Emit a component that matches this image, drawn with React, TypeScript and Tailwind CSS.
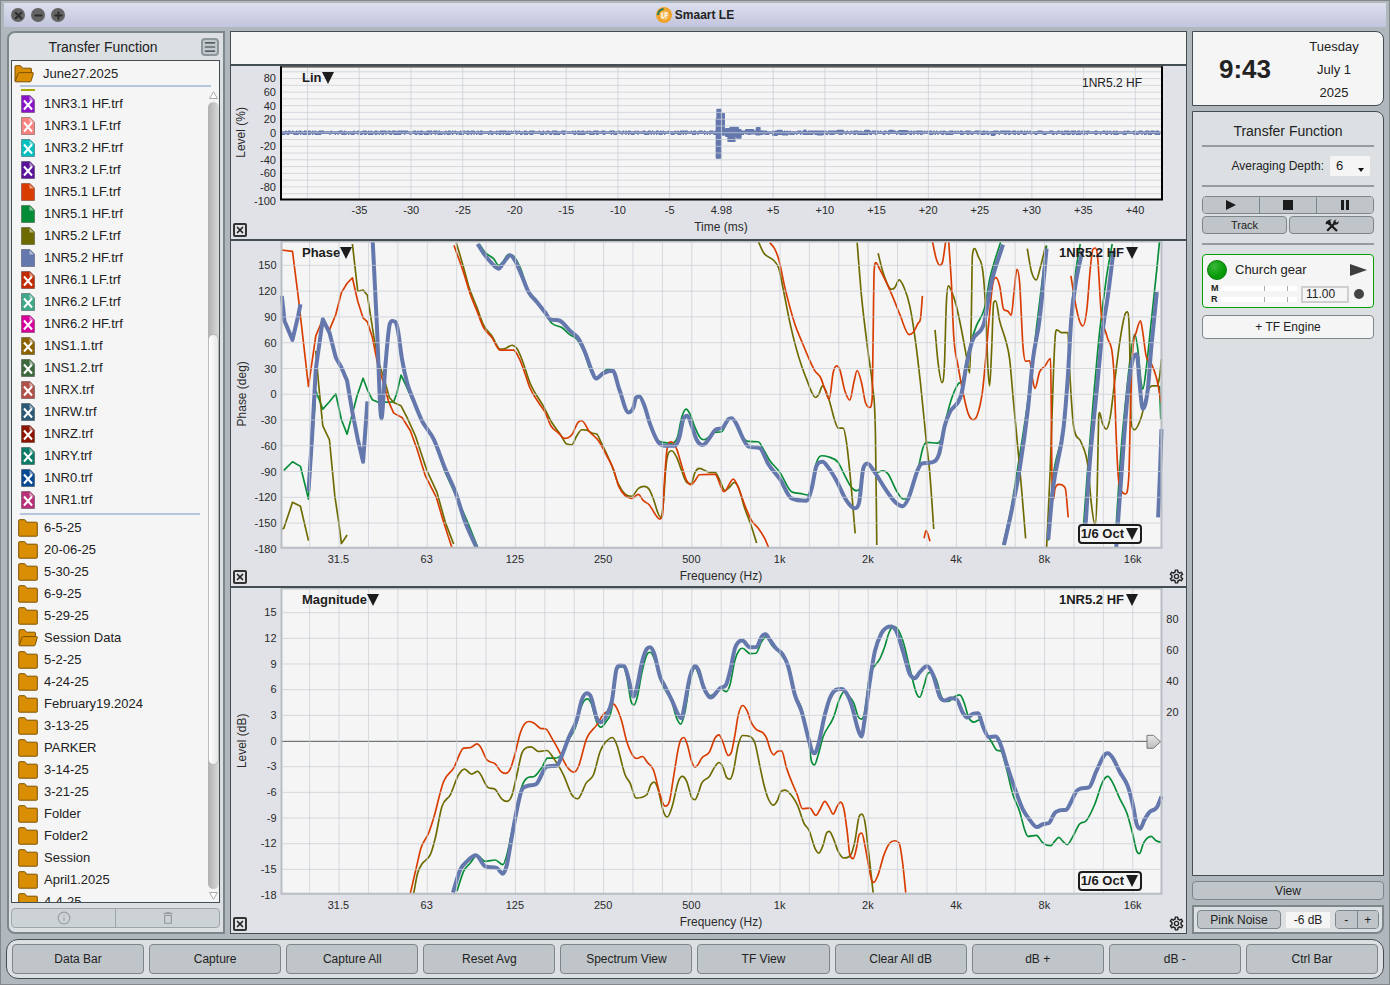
import { useState } from "react";
import type { ReactNode } from "react";
import { Info, Menu, Minus, Plus, X } from "lucide-react";
import { MdDeleteOutline, MdOutlineSettings } from "react-icons/md";

type Point = [number, number];
type Line = { pts: Point[]; straight?: boolean };
type Trace = { color: string; width: number; lines: Line[] };

const RED = "#d83c00";
const OLIVE = "#6d6b00";
const GREEN = "#068c37";
const BLUE = "#6478ad";

const files = [
    { name: "1NR3.1 HF.trf", color: "#8b14c8", hidden: true },
    { name: "1NR3.1 LF.trf", color: "#f8827d", hidden: true },
    { name: "1NR3.2 HF.trf", color: "#06c0c0", hidden: true },
    { name: "1NR3.2 LF.trf", color: "#5b1499", hidden: true },
    { name: "1NR5.1 LF.trf", color: RED },
    { name: "1NR5.1 HF.trf", color: GREEN },
    { name: "1NR5.2 LF.trf", color: OLIVE },
    { name: "1NR5.2 HF.trf", color: BLUE },
    { name: "1NR6.1 LF.trf", color: "#c22a00", hidden: true },
    { name: "1NR6.2 LF.trf", color: "#3fa888", hidden: true },
    { name: "1NR6.2 HF.trf", color: "#d8009c", hidden: true },
    { name: "1NS1.1.trf", color: "#8c6200", hidden: true },
    { name: "1NS1.2.trf", color: "#3d6a3d", hidden: true },
    { name: "1NRX.trf", color: "#b05049", hidden: true },
    { name: "1NRW.trf", color: "#2c5878", hidden: true },
    { name: "1NRZ.trf", color: "#8c1400", hidden: true },
    { name: "1NRY.trf", color: "#0b7a66", hidden: true },
    { name: "1NR0.trf", color: "#074a92", hidden: true },
    { name: "1NR1.trf", color: "#b83078", hidden: true },
];

const folders = [
    "6-5-25", "20-06-25", "5-30-25", "6-9-25", "5-29-25", "Session Data", "5-2-25", "4-24-25",
    "February19.2024", "3-13-25", "PARKER", "3-14-25", "3-21-25", "Folder", "Folder2", "Session",
    "April1.2025", "4-4-25",
];

const commands = [
    "Data Bar", "Capture", "Capture All", "Reset Avg", "Spectrum View",
    "TF View", "Clear All dB", "dB +", "dB -", "Ctrl Bar",
];

// "x,y x,y ..." -> points
const parse = (s: string, dx = 0): Point[] =>
    s.trim().split(/\s+/).map((p) => {
        const [x, y] = p.split(",").map(Number);
        return [x + dx, y];
    });

// traces are stored in two bands, the high band starts at 500 Hz
const low = (s: string): Line => ({ pts: parse(s) });
const high = (s: string): Line => ({ pts: parse(s, 1410) });
const full = (a: string, b: string): Line => ({ pts: [...parse(a), ...parse(b, 1410)] });
const straight = (s: string): Line => ({ pts: parse(s), straight: true });

// monotone cubic, so peaks do not overshoot
const toPath = ({ pts, straight: isStraight }: Line) => {
    if (isStraight) return "M" + pts.map((p) => p.join(" ")).join("L");
    const n = pts.length;
    const slope = (i: number) => (pts[i + 1][1] - pts[i][1]) / (pts[i + 1][0] - pts[i][0] || 1);
    const tan = pts.map((_, i) => {
        if (i === 0) return slope(0);
        if (i === n - 1) return slope(n - 2);
        const a = slope(i - 1);
        const b = slope(i);
        if (a * b <= 0) return 0;
        return Math.sign(a) * Math.min(Math.abs(a + b) / 2, 3 * Math.abs(a), 3 * Math.abs(b));
    });
    let d = `M${pts[0][0]} ${pts[0][1]}`;
    for (let i = 0; i < n - 1; i++) {
        const [x0, y0] = pts[i];
        const [x1, y1] = pts[i + 1];
        const h = (x1 - x0) / 3;
        d += `C${(x0 + h).toFixed(1)} ${(y0 + tan[i] * h).toFixed(1)} ${(x1 - h).toFixed(1)} ${(y1 - tan[i + 1] * h).toFixed(1)} ${x1} ${y1}`;
    }
    return d;
};

const phaseTraces: Trace[] = [
    {
        color: GREEN,
        width: 5,
        lines: [
            straight("160,704 186,678 210,692 234,790 256,465 277,520 297,498 316,474 333,552 350,595 380,480 398,427 411,462 426,492 445,500 490,498 500,470 512,418 525,445 545,490 575,555 610,610 645,710 675,775 710,855 742,934"),
            full(
                "747,24 765,50 790,68 805,88 818,78 835,55 850,60 870,95 895,165 920,195 945,232 965,262 995,275 1020,297 1040,310 1060,345 1080,400 1097,428 1120,408 1135,400 1150,405 1165,455 1180,500 1195,528 1210,515 1220,485 1228,480 1240,500 1255,545 1280,610 1300,620 1325,622 1342,605 1355,545 1368,520 1380,535 1395,575",
                "0,605 12,612 25,605 40,590 65,588 80,562 93,548 105,560 125,600 145,617 175,618 190,640 210,675 240,710 275,768 300,773 325,778 337,745 350,680 365,660 385,663 415,680 435,720 455,755 470,765 480,758 490,700 500,685 515,695 530,710 550,705 565,715 590,765 610,790 625,790 640,750 655,700 670,635 682,620 712,622 725,608 740,545 755,490 775,445 790,430 800,375 815,315 830,270 855,215 870,130 903,18"
            ),
            high("910,928 935,815 960,660 980,530 998,390 1010,280 1041,28"),
            high("1046,915 1060,730 1090,580 1105,420 1115,240 1128,110 1142,24"),
            high("1152,870 1165,690 1180,510 1200,290 1220,130 1238,24"),
            high("1250,870 1265,640 1283,450 1297,330 1306,295 1315,340 1325,440 1330,460 1340,400 1355,260 1372,100 1380,18"),
            high("1380,450 1384,550"),
        ],
    },
    {
        color: OLIVE,
        width: 5,
        lines: [
            straight("152,880 160,878 186,800 210,812 234,915"),
            straight("256,345 265,450 277,570 297,612 313,780 325,860 333,924 350,898"),
            straight("366,24 382,166 398,162 411,178 430,300 445,380 460,425 477,485 490,500 512,510 530,545 555,600 590,705 620,770 645,860 670,925"),
            full(
                "678,20 700,95 715,150 740,215 760,268 785,300 810,340 825,338 845,328 860,338 875,370 900,443 940,512 965,560 990,595 1010,625 1025,627 1040,600 1055,582 1070,583 1085,592 1100,595 1112,618 1145,690 1165,745 1185,775 1205,782 1225,758 1243,752 1258,762 1270,790 1283,830 1292,845 1300,800 1308,690 1315,652 1325,645 1340,665 1355,705 1370,740 1383,744 1395,710 1408,698 1440,710",
                "45,710 60,735 75,765 88,755 103,740 115,755 135,820 152,865 170,922"
            ),
            high("175,16 192,52 220,72 237,98 250,160 270,260 287,330 305,390 320,430 335,468 347,485 357,475 368,450 378,465 390,500 405,555 415,577 430,577 440,620 452,730 466,893"),
            high("472,20 485,180 505,350 518,450 527,600 531,928"),
            high("535,52 550,110 575,160 585,155 598,132 615,160 630,210 645,300 662,440 680,620 690,710 702,880"),
            high("706,282 715,380 727,440 734,390 740,200 746,150 755,165 770,210 785,280 800,360 810,412 815,240 818,60 825,38 835,60 850,110 858,220 865,400 870,450 876,340 882,200 888,195 900,255 920,320 930,370 940,480 953,620 965,750 978,908"),
            high("983,38 995,105 1010,132 1022,95 1038,30"),
            high("1041,936 1052,700 1062,400 1068,290 1072,282 1085,290 1105,290 1110,400 1122,570 1145,620 1165,690 1175,800 1187,870 1193,760 1197,560 1200,530 1208,560 1220,580 1232,545 1245,440 1262,310 1275,240 1283,228 1290,300 1295,560 1305,582 1325,545 1345,465 1360,450 1372,450 1380,425 1386,370"),
        ],
    },
    {
        color: RED,
        width: 5,
        lines: [
            straight("152,42 186,46 203,180 234,452 256,300 277,250 297,282 316,236 333,170 350,142 366,126 382,196 398,246 411,258 426,305 443,390 456,430 474,495 490,532 515,545 540,585 560,640 585,720 618,785 640,860 665,936"),
            full(
                "671,28 700,110 720,175 740,225 760,275 785,305 810,343 850,343 868,370 885,415 900,458 925,500 945,530 962,570 985,592 1003,608 1025,597 1045,558 1055,555 1078,588 1105,615 1130,660 1150,700 1165,750 1185,780 1205,788 1225,776 1240,795 1258,808 1275,835 1288,850 1297,840 1303,740 1311,640 1323,618 1340,640 1355,690 1370,735 1383,747 1395,735 1408,717 1440,716",
                "45,716 72,768 100,730 115,755 135,810 155,855 175,878 195,910 206,936"
            ),
            high("210,20 225,40 237,72 255,155 285,265 305,315 330,375 345,405 362,425 375,460 388,490 400,410 410,390 420,402 435,465 450,493 462,440 472,404 485,440 497,500 510,515 517,490 520,300 523,105 528,80 540,100 560,140 580,185 600,235 628,296 640,290 655,262 662,250 668,180"),
            high("673,908 679,885 691,917"),
            high("698,16 710,70 720,88 728,80 738,16"),
            high("747,16 755,140 762,300 775,390 790,470 805,532 820,552 832,540 848,470 858,370 870,230 880,140 889,125 900,150 912,220 925,226 935,238 942,180 952,100 960,140 970,330 978,376 990,375 998,425 1006,458 1020,408 1035,392 1053,368 1055,520 1057,720 1062,790 1066,760 1078,746 1097,757 1106,845"),
            high("1114,120 1128,205 1140,255 1150,270 1162,220 1172,100 1180,40 1187,36 1194,60 1205,230 1222,300 1243,405 1250,600 1256,720 1265,765 1278,775 1288,720 1293,520 1300,340 1310,290 1323,255 1330,290 1340,360 1355,382 1372,430 1385,500"),
        ],
    },
    {
        color: BLUE,
        width: 12,
        lines: [
            straight("154,180 162,255 186,312 203,240 210,205"),
            straight("234,766 245,600 256,400 277,250 297,290 316,365 333,395 350,435 366,530 382,610 398,678 411,497"),
            low("427,16 440,280 453,548 465,390 478,265 486,255 495,258 502,280 515,370 530,440 550,495 575,555 610,610 645,700 675,768 705,860 738,934"),
            full(
                "742,24 760,52 785,82 805,98 820,80 840,58 855,75 875,120 895,168 920,198 945,230 960,250 990,255 1020,285 1045,308 1065,350 1085,405 1097,428 1120,412 1148,405 1168,462 1195,530 1210,515 1218,485 1228,482 1243,510 1260,565 1285,620 1305,630 1335,630 1348,605 1360,550 1372,540 1385,570 1400,612",
                "8,628 17,622 30,605 45,583 70,574 85,550 95,547 108,562 130,610 145,632 180,637 205,685 240,730 275,788 320,795 335,760 350,690 368,678 385,695 410,735 440,795 465,818 478,800 490,700 503,683 525,710 560,765 590,803 608,812 625,790 655,700 667,683 695,680 718,655 735,570 750,530 785,475 800,390 818,315 853,262 875,140 910,26"
            ),
            high("913,928 935,830 960,700 985,520 1000,370 1020,250 1041,38"),
            high("1046,912 1060,760 1092,575 1105,420 1115,250 1128,145 1148,45"),
            high("1158,870 1170,690 1190,480 1210,280 1225,180 1242,45"),
            high("1250,936 1262,770 1285,470 1300,370 1312,355 1320,440 1330,520 1345,460 1355,340 1365,240 1372,168"),
            high("1376,845 1382,700 1386,580"),
        ],
    },
];

const magnitudeTraces: Trace[] = [
    {
        color: GREEN,
        width: 5,
        lines: [
            full(
                "680,920 700,860 720,835 740,812 765,830 795,826 818,840 830,810 845,740 860,670 875,605 890,580 915,573 935,548 952,520 975,520 995,508 1012,470 1035,430 1050,375 1062,348 1072,342 1083,355 1100,412 1112,427 1128,410 1145,370 1152,300 1163,250 1180,245 1190,275 1203,350 1212,360 1222,335 1235,265 1250,210 1260,202 1272,220 1290,280 1300,305 1325,350 1340,400 1352,418 1365,380 1380,290 1395,248 1410,280 1425,320 1436,330",
                "32,332 45,325 60,310 78,320 90,300 105,225 118,195 128,190 150,206 168,205 185,170 200,155 215,180 240,205 265,245 285,330 305,370 325,460 335,530 344,540 355,510 370,455 400,400 420,340 433,320 445,330 462,355 475,395 485,403 495,380 508,280 520,250 540,222 555,185 567,145 580,125 592,130 610,170 630,250 650,325 660,337 672,305 685,265 695,262 710,285 725,335 745,350 765,335 780,330 792,350 808,400 822,412 840,405 855,440 875,470 890,495 905,500 920,550 940,630 960,680 975,735 985,755 1010,752 1030,775 1053,783 1065,770 1078,758 1090,770 1103,780 1120,755 1140,718 1160,708 1185,660 1210,590 1225,575 1240,595 1260,640 1282,685 1300,750 1312,800 1320,807 1332,775 1355,755 1370,768 1385,773"
            ),
        ],
    },
    {
        color: OLIVE,
        width: 5,
        lines: [
            full(
                "550,926 562,865 575,838 600,810 615,760 635,665 660,630 685,570 703,553 724,568 742,560 772,607 795,614 815,643 830,650 845,632 860,570 875,505 890,488 903,486 925,500 950,497 970,520 1000,570 1025,630 1043,642 1068,595 1090,570 1110,500 1125,474 1147,458 1160,480 1185,570 1200,595 1218,640 1250,630 1262,600 1272,592 1283,610 1300,680 1312,697 1325,670 1345,590 1357,575 1370,590 1385,638 1395,645 1405,625 1415,595 1438,575",
                "45,545 57,533 68,545 80,578 90,583 100,560 115,480 128,452 150,455 165,475 180,545 192,600 205,642 220,661 232,648 242,622 255,616 275,632 293,662 312,715 328,738 345,790 357,805 370,780 380,745 388,740 400,760 415,800 432,820 452,812 465,770 478,695 486,688 495,710 505,790 520,924"
            ),
        ],
    },
    {
        color: RED,
        width: 5,
        lines: [
            full(
                "540,926 560,840 572,790 595,745 610,700 640,590 670,550 700,490 722,488 740,477 750,485 770,525 795,537 812,560 825,566 840,553 855,505 870,445 885,415 898,410 912,415 930,430 948,433 965,460 985,495 1010,545 1032,562 1045,545 1070,460 1100,420 1120,388 1135,378 1150,358 1160,370 1175,410 1190,470 1210,515 1220,521 1237,515 1252,533 1270,555 1290,630 1305,664 1318,650 1330,580 1345,490 1352,465 1362,458 1372,480 1385,530 1395,547 1405,538 1415,520 1438,502",
                "45,460 57,450 68,470 85,512 95,500 105,450 115,390 128,362 140,375 155,415 168,433 190,445 200,460 212,497 222,510 232,500 245,498 260,550 275,590 292,630 308,672 330,670 348,692 360,675 375,650 388,668 400,688 412,665 422,652 432,672 442,740 450,810 460,822 470,790 478,750 486,745 495,780 505,835 515,885 522,893 535,870 552,812 570,775 585,768 598,775 608,830 618,924"
            ),
        ],
    },
    {
        color: BLUE,
        width: 12,
        lines: [
            full(
                "668,924 690,855 710,830 737,812 765,845 800,850 818,867 830,840 845,755 860,675 875,615 890,604 918,598 950,545 980,542 1000,500 1015,460 1040,405 1055,345 1070,325 1082,335 1100,400 1112,412 1130,390 1145,350 1160,250 1170,242 1182,243 1195,280 1210,335 1220,310 1235,235 1250,192 1260,187 1272,205 1290,275 1305,305 1325,345 1345,390 1355,400 1362,370 1380,275 1395,243 1405,255 1420,305 1436,335",
                "32,338 60,310 78,300 90,260 105,190 115,172 127,167 150,187 170,186 185,155 197,148 210,165 228,190 248,208 265,245 285,330 305,380 328,470 337,500 345,505 355,480 375,390 390,340 408,315 425,312 440,325 455,360 475,435 485,455 495,400 510,290 525,200 545,145 560,128 575,125 590,140 610,200 630,268 645,280 660,262 682,243 700,270 720,335 735,347 755,340 770,343 790,385 803,398 818,388 835,385 850,425 868,457 888,455 905,485 920,535 945,610 970,675 990,705 1012,727 1030,718 1048,715 1065,685 1080,677 1100,675 1115,650 1130,620 1145,611 1168,608 1190,560 1215,510 1225,505 1240,520 1260,560 1285,605 1300,660 1312,720 1322,732 1335,705 1350,682 1372,668 1386,635"
            ),
        ],
    },
];

// [from, to, top, bottom] of the loud part of the impulse
const burst = [
    [1457, 1464, 262, 385], [1459, 1475, 235, 385], [1475, 1485, 248, 316], [1485, 1500, 293, 320],
    [1492, 1517, 300, 335], [1498, 1527, 289, 320], [1518, 1535, 296, 325], [1545, 1573, 296, 312],
    [1577, 1592, 290, 315], [1592, 1612, 300, 312], [1640, 1658, 298, 312], [1626, 1644, 302, 317],
    [1720, 1730, 297, 310], [1655, 1676, 303, 315], [1820, 1842, 298, 310], [1902, 1920, 298, 311],
    [1976, 1992, 298, 311], [2006, 2032, 299, 313], [2282, 2296, 302, 317], [1760, 1780, 302, 315],
];

const noisePath = () => {
    let d = "";
    for (let x = 156; x < 2792; x += 4) {
        const r = Math.abs(Math.sin(x * 12.9898) * 43758.5453) % 1;
        const q = Math.abs(Math.sin(x * 78.233) * 12543.123) % 1;
        d += `M${x} ${r > 0.45 ? 300 : 303}V${q > 0.45 ? 314 : 311}`;
    }
    return d;
};

const range = (n: number) => Array.from({ length: n }, (_, i) => i);

const Traces = ({ traces, y }: { traces: Trace[]; y: number }) => (
    <g transform={`translate(230 ${y}) scale(0.33333)`} fill="none" strokeLinejoin="round">
        {traces.map((t) =>
            t.lines.map((line, i) => (
                <path key={t.color + i} d={toPath(line)} stroke={t.color} strokeWidth={t.width} />
            ))
        )}
    </g>
);

const FrequencyAxis = ({ y, titleY }: { y: number; titleY: number }) => (
    <>
        {["31.5", "63", "125", "250", "500", "1k", "2k", "4k", "8k", "16k"].map((label, i) => (
            <text key={label} x={338 + i * 88.35} y={y} fontSize="11" textAnchor="middle">{label}</text>
        ))}
        <text x="721" y={titleY} fontSize="12" textAnchor="middle">Frequency (Hz)</text>
    </>
);

const FrequencyGrid = ({ top, bottom }: { top: number; bottom: number }) => (
    <>
        {range(29).map((i) => (
            <line key={i} x1={309.2 + i * 29.43} x2={309.2 + i * 29.43} y1={top} y2={bottom} />
        ))}
    </>
);

const Triangle = () => (
    <svg width="12" height="12" viewBox="0 0 12 12" className="pointer-events-none shrink-0" aria-hidden="true">
        <path d="M0 0H12L6 12Z" fill="#1c1c1c" />
    </svg>
);

type PickerProps = { label: string; options: string[]; variant?: "plain" | "source" | "boxed" };

const pickerStyles = {
    plain: "",
    source: "gap-0.5 pr-1",
    boxed: "gap-0.5 rounded-sm border-2 border-[#1c1c1c] bg-[#f5f5f5] pl-px pr-0.5",
};

const Picker = ({ label, options, variant = "plain" }: PickerProps) => (
    <span className={`flex items-center text-[13px] leading-4 font-bold text-[#1c1c1c] ${pickerStyles[variant]}`}>
        <select aria-label={label} className="field-sizing-content appearance-none bg-transparent font-bold">
            {options.map((o) => (
                <option key={o}>{o}</option>
            ))}
        </select>
        <Triangle />
    </span>
);

type ChartProps = {
    name: string;
    viewBox: string;
    className: string;
    settings?: boolean;
    picker: ReactNode;
    source: ReactNode;
    banding?: ReactNode;
    children: ReactNode;
};

const Chart = (props: ChartProps) => (
    <section aria-label={props.name} className={`relative min-h-0 border-t-2 border-[#434d52] bg-[#e0e2e7] ${props.className}`}>
        <svg viewBox={props.viewBox} className="block h-full w-full text-[#2a2a2a]" fill="currentColor" role="img" aria-label={props.name}>
            {props.children}
        </svg>
        <div className="absolute top-1 left-[71px]">{props.picker}</div>
        <div className="absolute top-1 right-11">{props.source}</div>
        {props.banding && <div className="absolute right-11 bottom-[42px]">{props.banding}</div>}
        <button
            aria-label={`Close ${props.name}`}
            className="absolute bottom-0.5 left-0.5 flex size-3.5 items-center justify-center rounded-xs border-2 border-[#333]"
        >
            <X size={10} strokeWidth={4} />
        </button>
        {props.settings && (
            <button aria-label={`${props.name} settings`} className="absolute right-px bottom-px">
                <MdOutlineSettings size={17} />
            </button>
        )}
    </section>
);

const ImpulseChart = () => (
    <Chart
        name="Impulse response"
        viewBox="231 66 955 172"
        className="flex-[174]"
        picker={<Picker label="Impulse scale" options={["Lin", "Log", "ETC"]} />}
        source={<span className="text-xs leading-3">1NR5.2 HF</span>}
    >
        <rect x="281" y="66" width="881" height="133" fill="#f5f5f5" />
        <g transform="translate(230 30) scale(0.33333)">
            <path d={noisePath()} stroke={BLUE} strokeWidth="4" />
            <path d="M156 307H2792" stroke={BLUE} strokeWidth="8" />
            {burst.map(([a, b, top, bottom], i) => (
                <rect key={i} x={a} y={top} width={b - a} height={bottom - top} rx="3" fill={BLUE} />
            ))}
        </g>
        <g stroke="#c9cdd6" strokeOpacity="0.75">
            {range(19).map((i) => (
                <line key={i} x1="282" x2="1161" y1={71.4 + i * 6.77} y2={71.4 + i * 6.77} />
            ))}
            {range(17).map((i) => (
                <line key={i} x1={307.5 + i * 51.74} x2={307.5 + i * 51.74} y1="67" y2="198" />
            ))}
        </g>
        <path d="M281 66V199H1162V66" fill="none" stroke="#000" strokeWidth="2" />
        <path d="M280 66.5H1163" stroke="#000" />
        {[80, 60, 40, 20, 0, -20, -40, -60, -80, -100].map((v, i) => (
            <text key={v} x="276" y={82 + i * 13.57} fontSize="11" textAnchor="end">{v}</text>
        ))}
        {["-35", "-30", "-25", "-20", "-15", "-10", "-5", "4.98", "+5", "+10", "+15", "+20", "+25", "+30", "+35", "+40"].map((v, i) => (
            <text key={v} x={359.5 + i * 51.7} y="214" fontSize="11" textAnchor="middle">{v}</text>
        ))}
        <text x="721" y="231" fontSize="12" textAnchor="middle">Time (ms)</text>
        <text transform="translate(245 132) rotate(-90)" fontSize="12" textAnchor="middle">Level (%)</text>
    </Chart>
);

const PhaseChart = () => (
    <Chart
        name="Phase"
        viewBox="231 240 955 346"
        className="flex-[348]"
        settings
        picker={<Picker label="Phase view" options={["Phase", "Magnitude"]} />}
        source={<Picker label="Phase source" options={["1NR5.2 HF", "1NR5.1 HF"]} variant="source" />}
        banding={<Picker label="Phase smoothing" options={["1/6 Oct", "1/3 Oct"]} variant="boxed" />}
    >
        <rect x="281" y="240" width="881" height="307" fill="#f5f5f5" />
        <Traces traces={phaseTraces} y={235} />
        <g stroke="#c9cdd6" strokeOpacity="0.75">
            <FrequencyGrid top={240} bottom={547} />
            {range(11).map((i) => (
                <line key={i} x1="282" x2="1161" y1={264.4 + i * 25.8} y2={264.4 + i * 25.8} />
            ))}
        </g>
        <path d="M281 240.5H1162V547H281Z" fill="none" stroke="#b9bdc4" strokeWidth="2" />
        {range(12).map((i) => (
            <text key={i} x="276" y={268.5 + i * 25.8} fontSize="11" textAnchor="end">{150 - i * 30}</text>
        ))}
        <FrequencyAxis y={562} titleY={579} />
        <text transform="translate(245 393) rotate(-90)" fontSize="12" textAnchor="middle">Phase (deg)</text>
    </Chart>
);

const MagnitudeChart = () => (
    <Chart
        name="Magnitude"
        viewBox="231 588 955 345"
        className="flex-[347]"
        settings
        picker={<Picker label="Magnitude view" options={["Magnitude", "Phase"]} />}
        source={<Picker label="Magnitude source" options={["1NR5.2 HF", "1NR5.1 HF"]} variant="source" />}
        banding={<Picker label="Magnitude smoothing" options={["1/6 Oct", "1/3 Oct"]} variant="boxed" />}
    >
        <defs>
            <linearGradient id="handle" x1="0" y1="0" x2="0" y2="1">
                <stop offset="0" stopColor="#e6e6e6" />
                <stop offset="1" stopColor="#bdbdbd" />
            </linearGradient>
        </defs>
        <rect x="281" y="588" width="881" height="306" fill="#f5f5f5" />
        <path d="M281 741.5H1161" stroke="#50565a" />
        <Traces traces={magnitudeTraces} y={585} />
        <g stroke="#c9cdd6" strokeOpacity="0.75">
            <FrequencyGrid top={588} bottom={894} />
            {range(11).filter((i) => i !== 5).map((i) => (
                <line key={i} x1="282" x2="1161" y1={612.7 + i * 25.7} y2={612.7 + i * 25.7} />
            ))}
        </g>
        <path d="M281 588.5H1162V894H281Z" fill="none" stroke="#b9bdc4" strokeWidth="2" />
        <path d="M1147.5 735.5H1154L1161 742L1154 748.5H1147.5Z" fill="url(#handle)" stroke="#777" />
        {range(12).map((i) => (
            <text key={i} x="276" y={616.5 + i * 25.7} fontSize="11" textAnchor="end">{15 - i * 3}</text>
        ))}
        {[80, 60, 40, 20].map((v, i) => (
            <text key={v} x="1173" y={623 + i * 31} fontSize="11" textAnchor="middle">{v}</text>
        ))}
        <FrequencyAxis y={909} titleY={926} />
        <text transform="translate(245 741) rotate(-90)" fontSize="12" textAnchor="middle">Level (dB)</text>
    </Chart>
);

const FolderIcon = ({ open }: { open?: boolean }) => (
    <svg width="20" height="18" viewBox="0 0 20 18" className="shrink-0" aria-hidden="true">
        <path
            d={open ? "M1 16V1.5Q1 .7 1.8 .7H6.5L8.6 3.2H16.6Q17.4 3.2 17.4 4V8" : "M.7 16.4V1.5Q.7 .7 1.5 .7H6.5Q7.2 .7 7.7 1.6L8.6 3.2H18.5Q19.3 3.2 19.3 4V16.4Q19.3 17.2 18.5 17.2H1.5Q.7 17.2 .7 16.4Z"}
            fill="#d98e04"
            stroke="#7d5200"
        />
        {open && <path d="M1.2 16.6L4 8.6Q4.3 7.6 5.3 7.6H18.6Q19.6 7.6 19.3 8.6L17.2 15.8Q16.9 16.8 16 16.8H1.8Q1 16.8 1.2 16.6Z" fill="#d98e04" stroke="#7d5200" />}
    </svg>
);

const FileIcon = ({ color, hidden }: { color: string; hidden?: boolean }) => (
    <svg width="14" height="18" viewBox="0 0 14 18" className="shrink-0" aria-hidden="true">
        <path d="M0.5 0.5H9L13.5 5V17.5H0.5Z" fill={color} stroke="#000" strokeOpacity="0.3" />
        <path d="M8.5 1V5.5H13Z" fill="#fff" fillOpacity="0.5" />
        {hidden && <path d="M3 5.5L11 14.5M11 5.5L3 14.5" stroke="#fff" strokeWidth="2" />}
    </svg>
);

const DataBar = () => (
    <aside className="flex w-[218px] shrink-0 flex-col rounded-l-lg border-2 border-[#7c878b] bg-[#dce0e3] px-[3px] pb-1 pl-0.5">
        <div className="flex h-[27px] items-center">
            <h2 className="flex-1 pr-1.5 text-center text-sm">Transfer Function</h2>
            <button
                aria-label="Data menu"
                className="mr-px flex size-[18px] items-center justify-center rounded-sm border-2 border-[#8d969a] bg-[#c3c9cc]"
            >
                <Menu size={14} strokeWidth={2} className="shrink-0 text-[#333a3e]" />
            </button>
        </div>
        <div className="flex min-h-0 flex-1 flex-col overflow-hidden border border-[#434d52] bg-[#f5f5f5]">
            <button className="flex h-6 shrink-0 items-center gap-[9px] pl-0.5 pt-0.5 text-left text-[13px]">
                <FolderIcon open />
                June27.2025
            </button>
            <div className="mr-2 ml-2 h-0.5 shrink-0 bg-[#b7c5dc]" />
            <div className="mt-0.5 flex min-h-0 flex-1">
                <div className="min-w-0 flex-1 overflow-hidden text-[13px]">
                    <div className="ml-[9px] h-1">
                        <div className="h-0.5 w-3.5 bg-[#a9a800]" />
                    </div>
                    <ul>
                        {files.map((f) => (
                            <li key={f.name}>
                                <button className="flex h-[22px] w-full items-center gap-[9px] pl-[9px] text-left">
                                    <FileIcon color={f.color} hidden={f.hidden} />
                                    {f.name}
                                </button>
                            </li>
                        ))}
                    </ul>
                    <div className="mt-0.5 mb-0.5 ml-2 mr-2 h-0.5 bg-[#b7c5dc]" />
                    <ul>
                        {folders.map((name) => (
                            <li key={name}>
                                <button className="flex h-[22px] w-full items-center gap-1.5 pl-1.5 text-left">
                                    <FolderIcon open={name === "Session Data"} />
                                    {name}
                                </button>
                            </li>
                        ))}
                    </ul>
                </div>
                <div className="flex w-[11px] shrink-0 flex-col items-center gap-[3px] py-0.5">
                    <svg width="9" height="8" viewBox="0 0 9 8" aria-hidden="true">
                        <path d="M.5 7.5L4.5 .8L8.5 7.5Z" fill="#fff" stroke="#aaa" />
                    </svg>
                    <div className="flex w-full flex-1 flex-col rounded-full bg-linear-to-r from-[#b0b0b0] to-[#dadada]">
                        <div className="flex-[233]" />
                        <div className="flex-[430] rounded-full border border-[#bbb] bg-linear-to-r from-white to-[#e6e6e6]" />
                        <div className="flex-[124]" />
                    </div>
                    <svg width="9" height="8" viewBox="0 0 9 8" aria-hidden="true">
                        <path d="M.5 .5L4.5 7.2L8.5 .5Z" fill="#fff" stroke="#aaa" />
                    </svg>
                </div>
            </div>
        </div>
        <div className="mt-[5px] flex h-5 shrink-0 overflow-hidden rounded-sm border border-[#9fa6a9] bg-[#cdd2d5] text-[#9aa0a3]">
            <button disabled aria-label="Info" className="flex flex-1 items-center justify-center border-r border-[#9fa6a9]">
                <Info size={14} />
            </button>
            <button disabled aria-label="Delete" className="flex flex-1 items-center justify-center">
                <MdDeleteOutline size={16} />
            </button>
        </div>
    </aside>
);

const Meter = ({ name }: { name: string }) => (
    <div className="flex h-[11px] items-center gap-0.5">
        <span className="w-2 text-[9px] leading-[11px] font-bold">{name}</span>
        <div className="flex h-[5px] flex-1 bg-white">
            <div className="flex-[45] border-r border-[#aaa]" />
            <div className="flex-[23] border-r border-[#aaa]" />
            <div className="flex-[9]" />
        </div>
    </div>
);

const toolButton = "flex flex-1 items-center justify-center bg-[#bfc5c9]";

const ControlBar = () => {
    const [depth, setDepth] = useState("6");

    return (
        <aside className="flex w-[192px] shrink-0 flex-col gap-[5px]">
            <div className="flex h-[75px] shrink-0 items-center rounded-r-lg border border-[#434d52] bg-[#f5f5f5] pt-0.5">
                <time className="flex-1 pl-3 text-center text-[26px] font-bold">9:43</time>
                <div className="w-[98px] text-center text-[13px] leading-[23px]">
                    <p>Tuesday</p>
                    <p>July 1</p>
                    <p>2025</p>
                </div>
            </div>

            <section className="flex min-h-0 flex-1 flex-col rounded-tr-lg border border-[#434d52] bg-[#dce0e3] px-[9px]">
                <h2 className="flex h-[35px] shrink-0 items-end justify-center border-b-2 border-[#969b9e] pb-1 text-sm leading-5">
                    Transfer Function
                </h2>
                <div className="flex h-10 shrink-0 items-center justify-end border-b-2 border-[#969b9e] pr-1">
                    <label htmlFor="depth" className="pr-1.5 text-xs">Averaging Depth:</label>
                    <span className="relative flex">
                        <select
                            id="depth"
                            value={depth}
                            onChange={(e) => setDepth(e.target.value)}
                            className="h-5 w-10 appearance-none rounded-xs bg-[#f5f5f5] pl-1.5 text-[13px]"
                        >
                            <option>6</option>
                            <option>8</option>
                            <option>16</option>
                        </select>
                        <svg width="6" height="4" viewBox="0 0 6 4" className="pointer-events-none absolute right-1.5 bottom-1" aria-hidden="true">
                            <path d="M0 0H6L3 4Z" fill="#111" />
                        </svg>
                    </span>
                </div>
                <div className="mt-[9px] flex h-[18px] shrink-0 divide-x divide-[#7d868a] overflow-hidden rounded-sm border border-[#7d868a]">
                    <button aria-label="Play" className={toolButton}>
                        <svg width="10" height="10" viewBox="0 0 10 10"><path d="M0 0L10 5L0 10Z" fill="#1c1c1c" /></svg>
                    </button>
                    <button aria-label="Stop" className={toolButton}>
                        <svg width="10" height="10" viewBox="0 0 10 10"><path d="M0 0H10V10H0Z" fill="#1c1c1c" /></svg>
                    </button>
                    <button aria-label="Pause" className={toolButton}>
                        <svg width="10" height="10" viewBox="0 0 10 10"><path d="M1 0H4V10H1ZM6 0H9V10H6Z" fill="#1c1c1c" /></svg>
                    </button>
                </div>
                <div className="mt-0.5 flex h-[18px] shrink-0 gap-0.5 text-[11px]">
                    <button className={`${toolButton} rounded-sm border border-[#7d868a]`}>Track</button>
                    <button aria-label="Tools" className={`${toolButton} rounded-sm border border-[#7d868a]`}>
                        <svg width="14" height="13" viewBox="0 0 14 13" aria-hidden="true">
                            <path d="M4.4 4.6L12 12M9.6 4.2L2.2 11.8" stroke="#1c1c1c" strokeWidth="2.2" />
                            <path d="M.4 4.2Q2 .6 6.6 .6L5 2.2L6.4 3.8L4 6.2L2.6 4.8L1.6 5.6Z" fill="#1c1c1c" />
                            <path d="M11.6 .4L10.3 2L11 3.2L12.2 3.4L13.7 2Q14 5 11.4 5.6Q9 6 8.3 4.2Q7.8 1 11.6 .4Z" fill="#1c1c1c" />
                        </svg>
                    </button>
                </div>
                <hr className="mt-[9px] shrink-0 border-t-2 border-[#969b9e]" />
                <div className="mt-[9px] flex h-[54px] shrink-0 flex-col rounded-sm border border-[#06a006] bg-[#f5f5f5]">
                    <div className="flex h-7 items-center pt-px pr-1.5 pl-1">
                        <span className="size-5 rounded-full border border-[#067a06] bg-[radial-gradient(circle_at_35%_30%,#3cb83c,#069a06_60%)]" />
                        <span className="flex-1 pl-2 text-[13px]">Church gear</span>
                        <svg width="17" height="12" viewBox="0 0 17 12" aria-hidden="true"><path d="M0 0L17 6L0 12Z" fill="#3e3e3e" /></svg>
                    </div>
                    <div className="flex items-center pr-[9px] pl-2">
                        <div className="flex-1">
                            <Meter name="M" />
                            <Meter name="R" />
                        </div>
                        <input
                            aria-label="Delay"
                            defaultValue="11.00"
                            className="mx-1 h-[17px] w-12 border-2 border-[#cfcfcf] bg-[#f5f5f5] pl-[3px] text-xs"
                        />
                        <span className="ml-px size-2.5 rounded-full bg-[#444]" />
                    </div>
                </div>
                <button className="mt-[7px] h-6 shrink-0 rounded-sm border border-[#7d868a] bg-[#f5f5f5] text-xs leading-4">
                    + TF Engine
                </button>
            </section>

            <button className="h-[19px] shrink-0 rounded-sm border border-[#7d868a] bg-[#bfc5c9] text-xs leading-4">View</button>

            <div className="flex h-[29px] shrink-0 items-center justify-between rounded-br-lg border-2 border-[#7d868a] bg-[#dce0e3] px-[3px] text-xs">
                <button className="h-[19px] w-[84px] rounded-sm border border-[#7d868a] bg-[#bfc5c9] leading-4">Pink Noise</button>
                <span className="flex h-4 w-11 items-center justify-center bg-[#f5f5f5]">-6 dB</span>
                <div className="flex h-[19px] w-11 divide-x divide-[#7d868a] overflow-hidden rounded-sm border border-[#7d868a]">
                    <button aria-label="Level down" className={toolButton}>-</button>
                    <button aria-label="Level up" className={toolButton}>+</button>
                </div>
            </div>
        </aside>
    );
};

const TitleBar = () => (
    <header className="relative flex h-6 shrink-0 items-center justify-center bg-linear-to-b from-[#dddfee] to-[#c2c5dc]">
        <div className="absolute left-[7px] flex gap-1.5 text-[#2c2c2c]">
            {[X, Minus, Plus].map((Icon, i) => (
                <button key={i} aria-label={["Close", "Minimize", "Zoom"][i]} className="flex size-3.5 items-center justify-center rounded-full bg-[#646464]">
                    <Icon size={11} strokeWidth={4} />
                </button>
            ))}
        </div>
        <svg width="16" height="16" viewBox="0 0 16 16" className="mr-[3px]" aria-hidden="true">
            <circle cx="8" cy="8" r="8" fill="#f0a32a" />
            <circle cx="8.5" cy="8.5" r="4.6" fill="#f6bf62" />
            <path d="M2 8A6 6 0 0 1 7.5 2" fill="none" stroke="#1f7a5c" strokeWidth="2" />
            <path d="M6 5.8V10.6H8M9.2 10.8V6.2H12M9.2 8.5H11.4" stroke="#fff" strokeWidth="1.2" fill="none" />
        </svg>
        <h1 className="text-xs font-bold">Smaart LE</h1>
    </header>
);

const App = () => {
    return (
        <div className="flex h-screen flex-col border border-[#83888b] bg-[#b1b8bd] p-[3px] pt-0.5 font-['Liberation_Sans',Arial,sans-serif] text-[#222]">
            <TitleBar />
            <main className="flex min-h-0 flex-1 gap-[5px] pt-1 pr-0.5 pl-[3px]">
                <DataBar />
                <div className="flex min-w-0 flex-1 flex-col border border-[#434d52]">
                    <div className="h-8 shrink-0 bg-[#f5f5f5]" />
                    <ImpulseChart />
                    <PhaseChart />
                    <MagnitudeChart />
                </div>
                <ControlBar />
            </main>
            <nav className="mx-0.5 mt-[5px] mb-0.5 flex h-10 shrink-0 gap-[5px] rounded-xl border border-[#434d52] bg-[#dce0e3] p-1 px-[5px]">
                {commands.map((c) => (
                    <button key={c} className="flex-1 rounded-sm border border-[#7d868a] bg-[#bfc5c9] text-xs">
                        {c}
                    </button>
                ))}
            </nav>
        </div>
    );
};

export default App;
